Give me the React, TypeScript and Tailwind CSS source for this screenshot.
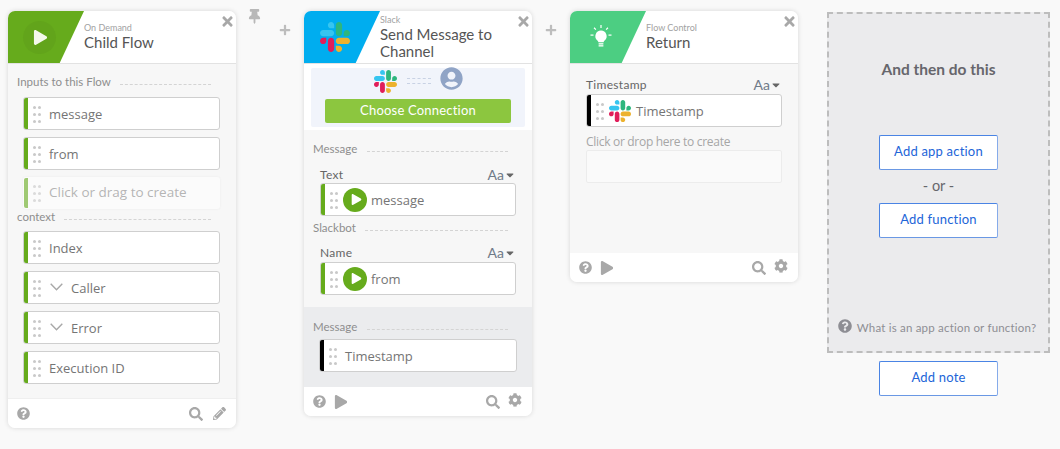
import React from 'react'
import {
  FaCaretDown,
  FaCog,
  FaPencilAlt,
  FaPlay,
  FaPlus,
  FaQuestionCircle,
  FaSearch,
  FaThumbtack,
  FaTimes,
  FaUserCircle,
} from 'react-icons/fa'

const SlackLogo = ({ size }: { size: number }) => (
  <svg width={size} height={size} viewBox="0 0 122.8 122.8" className="shrink-0">
    <path d="M25.8 77.6c0 7.1-5.8 12.9-12.9 12.9S0 84.7 0 77.6s5.8-12.9 12.9-12.9h12.9v12.9zm6.5 0c0-7.1 5.8-12.9 12.9-12.9s12.9 5.8 12.9 12.9v32.3c0 7.1-5.8 12.9-12.9 12.9s-12.9-5.8-12.9-12.9V77.6z" fill="#e01e5a" />
    <path d="M45.2 25.8c-7.1 0-12.9-5.8-12.9-12.9S38.1 0 45.2 0s12.9 5.8 12.9 12.9v12.9H45.2zm0 6.5c7.1 0 12.9 5.8 12.9 12.9s-5.8 12.9-12.9 12.9H12.9C5.8 58.1 0 52.3 0 45.2s5.8-12.9 12.9-12.9h32.3z" fill="#36c5f0" />
    <path d="M97 45.2c0-7.1 5.8-12.9 12.9-12.9s12.9 5.8 12.9 12.9-5.8 12.9-12.9 12.9H97V45.2zm-6.5 0c0 7.1-5.8 12.9-12.9 12.9s-12.9-5.8-12.9-12.9V12.9C64.7 5.8 70.5 0 77.6 0s12.9 5.8 12.9 12.9v32.3z" fill="#2eb67d" />
    <path d="M77.6 97c7.1 0 12.9 5.8 12.9 12.9s-5.8 12.9-12.9 12.9-12.9-5.8-12.9-12.9V97h12.9zm0-6.5c-7.1 0-12.9-5.8-12.9-12.9s5.8-12.9 12.9-12.9h32.3c7.1 0 12.9 5.8 12.9 12.9s-5.8 12.9-12.9 12.9H77.6z" fill="#ecb22e" />
  </svg>
)

const Bulb = () => (
  <svg width="24" height="26" viewBox="0 0 24 26" className="shrink-0">
    <g fill="#fff">
      <path d="M12 6.5a5.6 5.6 0 0 0-3.6 9.9c.7.6 1 1.2 1 1.9h5.2c0-.7.3-1.3 1-1.9A5.6 5.6 0 0 0 12 6.5z" />
      <rect x="9.6" y="19.2" width="4.8" height="1.3" />
      <rect x="9.6" y="21.2" width="4.8" height="1.3" />
      <rect x="11.4" y="1" width="1.2" height="3" />
      <rect x="1.5" y="10.5" width="3" height="1.2" />
      <rect x="19.5" y="10.5" width="3" height="1.2" />
      <path d="M4.6 4.2l.9-.9 1.8 1.9-.8.8zM19.4 4.2l-.9-.9-1.8 1.9.8.8z" />
    </g>
  </svg>
)

const Dots = () => (
  <svg width="8" height="18" viewBox="0 0 8 18" className="shrink-0" fill="#c9c9c9">
    <rect x="0" y="1" width="3" height="3" rx="1.5" />
    <rect x="5" y="1" width="3" height="3" rx="1.5" />
    <rect x="0" y="8" width="3" height="3" rx="1.5" />
    <rect x="5" y="8" width="3" height="3" rx="1.5" />
    <rect x="0" y="15" width="3" height="3" rx="1.5" />
    <rect x="5" y="15" width="3" height="3" rx="1.5" />
  </svg>
)

const Chevron = () => (
  <svg width="13" height="8" viewBox="0 0 13 8" className="shrink-0 mr-[8px] ml-[1px] mb-[2px]" fill="none" stroke="#a8a8a8" strokeWidth="1.4">
    <path d="M.7.7l5.8 6 5.8-6" />
  </svg>
)

const PlayBadge = () => (
  <span className="w-6 h-6 rounded-full bg-[#66ab1c] flex items-center justify-center shrink-0 -ml-[3px] mr-1">
    <FaPlay size={11} color="#fff" className="ml-[2px]" />
  </span>
)

interface PillProps {
  label: string
  color?: string
  faded?: boolean
  icon?: React.ReactNode
}

const Pill = ({ label, color = 'bg-[#66ab1c]', faded, icon }: PillProps) => (
  <div
    className={`flex items-center rounded-[3px] overflow-hidden bg-white font-['Open_Sans',sans-serif] ${
      faded
        ? 'h-[32px] text-[13.5px] border border-transparent opacity-60 shadow-[0_0_2px_#e4e4e4]'
        : 'h-[33px] text-[13px] border border-[#cfcfcf] text-[#757575]'
    }`}
  >
    <span className={`w-1 h-full shrink-0 ${color}`} />
    <span className="ml-[5px] mr-[8px] flex"><Dots /></span>
    {icon}
    <span className={faded ? 'text-[#8a8a8a] -mt-[2px]' : 'mt-[2px]'}>{label}</span>
  </div>
)

const SectionTitle = ({ label, lineLeft }: { label: string; lineLeft: string }) => (
  <div className="flex items-center text-[11.5px] leading-[14px] text-[#8e8e8e] font-['Lato',sans-serif]">
    <span>{label}</span>
    <span className={`flex-1 border-t border-dashed border-[#d4d4d4] mt-1 ${lineLeft}`} />
  </div>
)

const FieldLabel = ({ label }: { label: string }) => (
  <div className="flex items-center justify-between text-[12px] leading-[14px] text-[#666] font-['Lato',sans-serif]">
    <span className="tracking-[0.3px]">{label}</span>
    <span className="flex items-center text-[14px] text-[#6f7a88] font-['Lato',sans-serif]">
      Aa
      <FaCaretDown size={12} color="#666" />
    </span>
  </div>
)

const CardHeader = ({
  accent,
  kicker,
  title,
  children,
}: {
  accent: string
  kicker: string
  title: string
  children: React.ReactNode
}) => (
  <div className="relative h-[53px] flex bg-white border-b border-[#e2e2e2] font-['Lato',sans-serif] shrink-0">
    <div className={`w-[76px] h-[52px] flex items-center pl-[15px] shrink-0 [clip-path:polygon(0_0,100%_0,68%_100%,0_100%)] ${accent}`}>
      {children}
    </div>
    <div className="flex-1 flex flex-col justify-center pr-6 pb-[1px]">
      <div className="text-[9px] leading-[11px] text-[#a2a2a2]">{kicker}</div>
      <div className="text-[15px] leading-[17px] text-[#555] mt-[1px]">{title}</div>
    </div>
    <FaTimes size={15} color="#a8a8a8" className="absolute top-[3px] right-[1px]" />
  </div>
)

const CardFooter = ({ play, edit }: { play?: boolean; edit?: boolean }) => (
  <div className="h-[29px] bg-white flex items-center pl-[9px] pr-[10px] shrink-0">
    <FaQuestionCircle size={13} color="#a8a8a8" />
    {play && <FaPlay size={14} color="#a8a8a8" className="ml-[8px]" />}
    <span className="flex-1" />
    <FaSearch size={14} color="#a8a8a8" />
    {edit ? (
      <FaPencilAlt size={13} color="#a8a8a8" className="ml-[10px]" />
    ) : (
      <FaCog size={14} color="#a8a8a8" className="ml-[8px] mb-[3px]" />
    )}
  </div>
)

const Card = ({ children }: { children: React.ReactNode }) => (
  <div className="w-[228px] shrink-0 rounded-[7px] overflow-hidden bg-[#f7f7f7] shadow-[0_0_5px_rgba(0,0,0,0.14)] flex flex-col">
    {children}
  </div>
)

const OutlineButton = ({ label }: { label: string }) => (
  <button className="w-[119px] h-[35px] bg-white rounded-[2px] border border-[#4a84e4] border-r-[#86abea] border-b-[#6a98e4] text-[13px] text-[#2265d8] font-['Lato',sans-serif] tracking-[0.2px] pb-[2px]">
    {label}
  </button>
)

const App = () => {
  return (
    <div className="w-[1060px] h-[449px] overflow-hidden bg-[#f9f9f9] flex items-start pl-2 pt-[11px]">
      {/* Child Flow */}
      <div className="h-[417px] flex shrink-0">
        <Card>
          <CardHeader accent="bg-[#66ab1c]" kicker="On Demand" title="Child Flow">
            <span className="w-[33px] h-[33px] rounded-full bg-[#62a41b] flex items-center justify-center">
              <FaPlay size={15} color="#f4f8ec" className="ml-[2px]" />
            </span>
          </CardHeader>
          <div className="flex-1 px-[9px] pt-[11px]">
            <div className="pr-4">
              <SectionTitle label="Inputs to this Flow" lineLeft="ml-[9px]" />
            </div>
            <div className="ml-[6px] mr-[7px] mt-[8px] flex flex-col gap-[7px]">
              <Pill label="message" />
              <Pill label="from" />
              <Pill label="Click or drag to create" faded />
            </div>
            <div className="pr-4 mt-[1px]">
              <SectionTitle label="context" lineLeft="ml-[9px]" />
            </div>
            <div className="ml-[6px] mr-[7px] mt-[7px] flex flex-col gap-[7px]">
              <Pill label="Index" />
              <Pill label="Caller" icon={<Chevron />} />
              <Pill label="Error" icon={<Chevron />} />
              <Pill label="Execution ID" />
            </div>
          </div>
          <div className="h-px bg-[#efefef]" />
          <CardFooter edit />
        </Card>
      </div>

      {/* connector with pin */}
      <div className="w-[68px] h-[40px] shrink-0 flex">
        <FaThumbtack size={15} color="#b8b8b8" className="ml-[11px] -mt-[2px]" />
        <FaPlus size={12} color="#bdbdbd" className="ml-[17px] mt-[13px]" />
      </div>

      {/* Send Message */}
      <div className="h-[405px] flex shrink-0">
        <Card>
          <CardHeader accent="bg-[#00adef]" kicker="Slack" title="Send Message to Channel">
            <span className="ml-[1px] flex"><SlackLogo size={30} /></span>
          </CardHeader>
          <div className="bg-white h-[66px] px-[7px] pt-[4px] shrink-0">
            <div className="h-[59px] bg-[#f1f4fb] rounded-[2px] px-[14px] relative">
              <div className="h-[31px] flex items-start justify-center pl-[1px]">
                <span className="mt-[2px]"><SlackLogo size={23} /></span>
                <span className="w-[24px] ml-[10px] mt-[10px] h-[6px] border-y border-dashed border-[#c8d2e4]" />
                <FaUserCircle size={23} color="#90a4c6" className="ml-[9px] -mt-px" />
              </div>
              <div className="h-[24px] bg-[#8cc63f] rounded-[2px] text-white text-[13px] pb-[1px] flex items-center justify-center font-['Lato',sans-serif] tracking-[0.2px]">
                Choose Connection
              </div>
            </div>
          </div>
          <div className="flex-1 pl-[9px] pr-[16px] pt-[12px]">
            <div className="pr-[8px]">
              <SectionTitle label="Message" lineLeft="ml-[10px]" />
            </div>
            <div className="ml-[7px] mr-0 mt-[12px]">
              <FieldLabel label="Text" />
              <div className="mt-[1px]">
                <Pill label="message" icon={<PlayBadge />} />
              </div>
            </div>
            <div className="pr-[8px] mt-[5px]">
              <SectionTitle label="Slackbot" lineLeft="ml-[9px]" />
            </div>
            <div className="ml-[7px] mt-[11px]">
              <FieldLabel label="Name" />
              <div className="mt-[2px]">
                <Pill label="from" icon={<PlayBadge />} />
              </div>
            </div>
          </div>
          <div className="h-[80px] bg-[#ebecee] pl-[9px] pr-[15px] pt-[13px] shrink-0">
            <div className="pr-[9px]">
              <SectionTitle label="Message" lineLeft="ml-[10px]" />
            </div>
            <div className="ml-[6px] mt-[5px]">
              <Pill label="Timestamp" color="bg-black" />
            </div>
          </div>
          <CardFooter play />
        </Card>
      </div>

      {/* connector */}
      <div className="w-[38px] h-[40px] shrink-0 flex">
        <FaPlus size={12} color="#bdbdbd" className="ml-[13px] mt-[13px]" />
      </div>

      {/* Return */}
      <div className="h-[271px] flex shrink-0">
        <Card>
          <CardHeader accent="bg-[#4cce82]" kicker="Flow Control" title="Return">
            <span className="ml-[4px]"><Bulb /></span>
          </CardHeader>
          <div className="flex-1 px-4 pt-[14px]">
            <FieldLabel label="Timestamp" />
            <div className="mt-[2px]">
              <Pill label="Timestamp" color="bg-black" icon={<span className="-ml-[3px] mr-[5px] flex"><SlackLogo size={22} /></span>} />
            </div>
            <div className="mt-[8px] text-[12px] leading-[14px] tracking-[-0.3px] text-[#a6a6a6] font-['Open_Sans',sans-serif]">
              Click or drop here to create
            </div>
            <div className="mt-[1px] h-[33px] bg-[#fafafa] border border-[#ececec] rounded-[2px]" />
          </div>
          <CardFooter play />
        </Card>
      </div>

      {/* And then do this */}
      <div className="ml-[29px] shrink-0 flex flex-col items-center w-[223px]">
        <div className="w-full h-[341px] mt-px bg-[#ebebed] border-2 border-dashed border-[#bdbdbd] flex flex-col items-center pt-[46px] font-['Lato',sans-serif]">
          <div className="text-[15.5px] leading-[18px] font-bold text-[#66666c]">And then do this</div>
          <div className="mt-[57px]"><OutlineButton label="Add app action" /></div>
          <div className="mt-[7px] text-[14.5px] leading-[18px] text-[#66666c]">- or -</div>
          <div className="mt-[8px]"><OutlineButton label="Add function" /></div>
          <span className="flex-1" />
          <div className="mb-[15px] flex items-center text-[11.5px] text-[#8e8e94] tracking-[0.2px]">
            <FaQuestionCircle size={14} color="#8e8e94" className="mr-[5px] -ml-[3px] mb-[2px]" />
            What is an app action or function?
          </div>
        </div>
        <div className="mt-[8px]"><OutlineButton label="Add note" /></div>
      </div>
    </div>
  )
}

export default App
